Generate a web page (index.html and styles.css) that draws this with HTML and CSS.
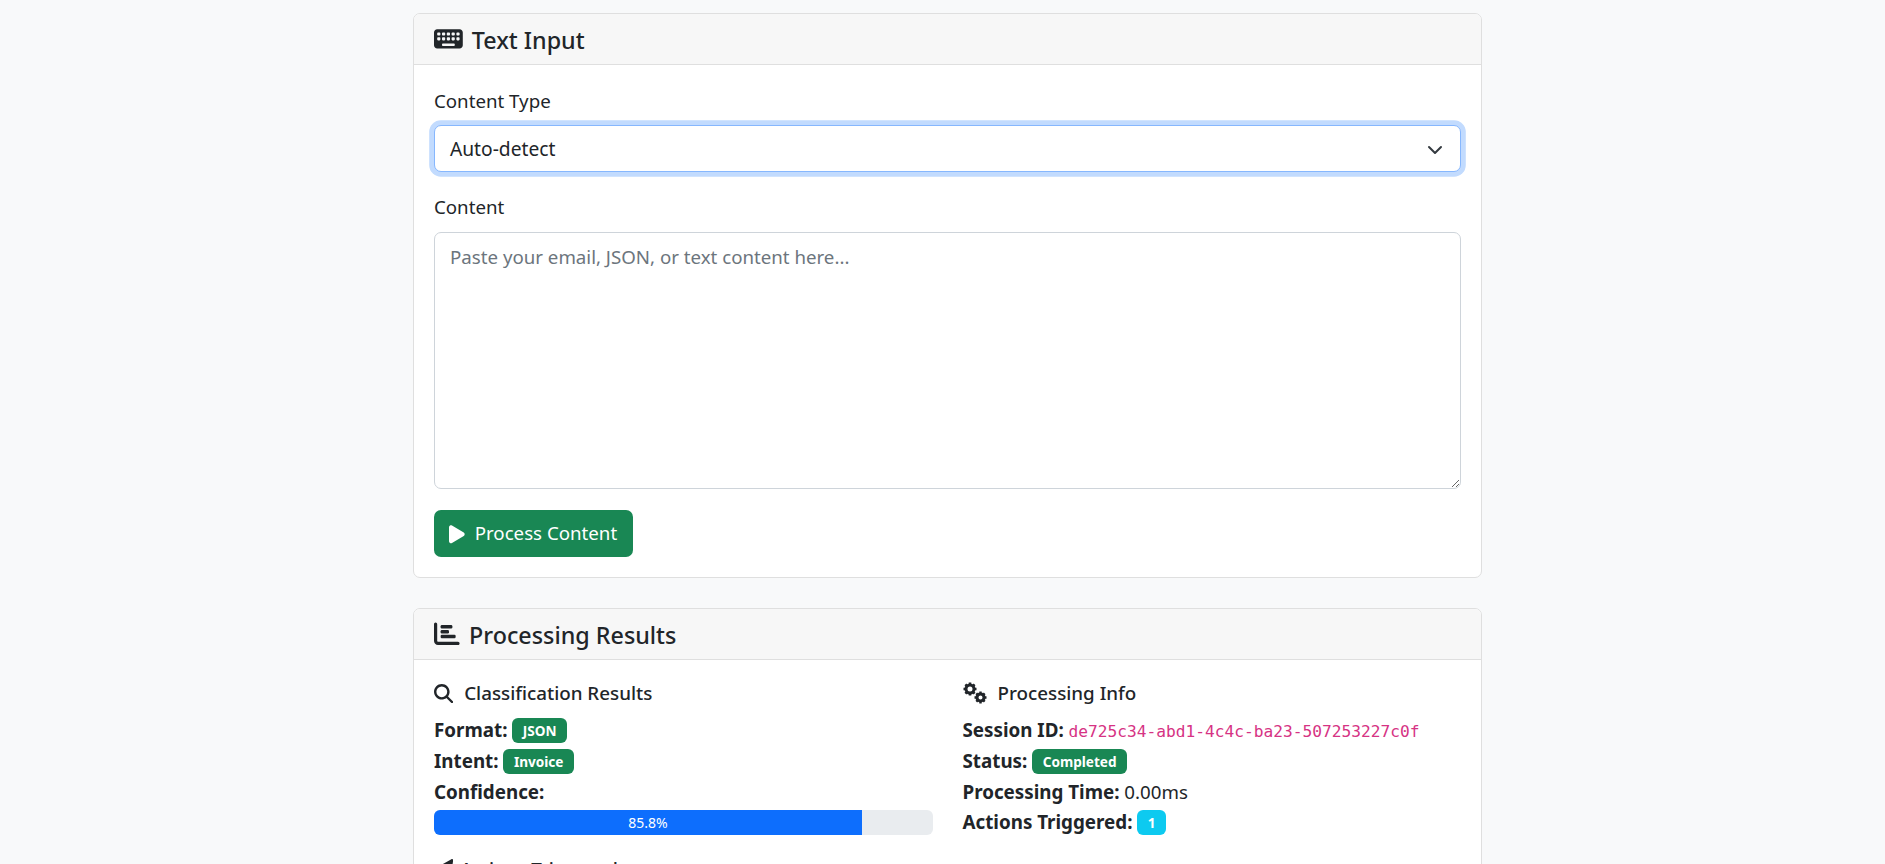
FILE: index.html
```html
<!doctype html>
<html lang="en">
<head>
<meta charset="UTF-8">
<title>Text Input</title>
<meta name="viewport" content="width=device-width,initial-scale=1">
<link rel="stylesheet" href="styles.css">
</head>
<body>
<div class="page">

 <div class="card card-input">
  <div class="card-header">
   <svg class="icon icon-keyboard" viewBox="0 0 576 512"><path d="M64 64C28.700 64 0 92.700 0 128V384c0 35.300 28.700 64 64 64H512c35.300 0 64-28.700 64-64V128c0-35.300-28.700-64-64-64H64zm16 64h32c8.800 0 16 7.200 16 16v32c0 8.800-7.200 16-16 16H80c-8.800 0-16-7.200-16-16V144c0-8.800 7.200-16 16-16zm-16 112c0-8.800 7.200-16 16-16h32c8.800 0 16 7.200 16 16v32c0 8.800-7.200 16-16 16H80c-8.800 0-16-7.200-16-16V240zm112-112h32c8.800 0 16 7.200 16 16v32c0 8.800-7.200 16-16 16H176c-8.800 0-16-7.200-16-16V144c0-8.800 7.200-16 16-16zm-16 112c0-8.800 7.200-16 16-16h32c8.800 0 16 7.200 16 16v32c0 8.800-7.200 16-16 16H176c-8.800 0-16-7.200-16-16V240zm112-112h32c8.800 0 16 7.200 16 16v32c0 8.800-7.200 16-16 16H272c-8.800 0-16-7.200-16-16V144c0-8.800 7.200-16 16-16zm-16 112c0-8.800 7.200-16 16-16h32c8.800 0 16 7.200 16 16v32c0 8.800-7.200 16-16 16H272c-8.800 0-16-7.200-16-16V240zm112-112h32c8.800 0 16 7.200 16 16v32c0 8.800-7.200 16-16 16H368c-8.800 0-16-7.200-16-16V144c0-8.800 7.200-16 16-16zm-16 112c0-8.800 7.200-16 16-16h32c8.800 0 16 7.200 16 16v32c0 8.800-7.200 16-16 16H368c-8.800 0-16-7.200-16-16V240zm112-112h32c8.800 0 16 7.200 16 16v32c0 8.800-7.200 16-16 16H464c-8.800 0-16-7.200-16-16V144c0-8.800 7.200-16 16-16zm-16 112c0-8.800 7.200-16 16-16h32c8.800 0 16 7.200 16 16v32c0 8.800-7.200 16-16 16H464c-8.800 0-16-7.200-16-16V240zM176 352H400c8.800 0 16 7.200 16 16v16c0 8.800-7.200 16-16 16H176c-8.800 0-16-7.200-16-16V368c0-8.800 7.200-16 16-16z"/></svg>
   <h5>Text Input</h5>
  </div>
  <div class="card-body">
   <div class="field">
    <label class="form-label">Content Type</label>
    <div class="select-box">
     <span>Auto-detect</span>
     <svg class="chevron" viewBox="0 0 16 16"><path fill="none" stroke="#343a40" stroke-linecap="round" stroke-linejoin="round" stroke-width="2" d="m2 5 6 6 6-6"/></svg>
    </div>
   </div>
   <div class="field field-last">
    <label class="form-label" for="content">Content</label>
    <textarea id="content" class="text-box" placeholder="Paste your email, JSON, or text content here..."></textarea>
   </div>
   <button class="btn-process">
    <svg class="icon icon-play" viewBox="0 0 384 512" preserveAspectRatio="none"><path d="M73 39c-14.800-9.100-33.400-9.400-48.500-.9S0 62.600 0 80V432c0 17.400 9.400 33.400 24.500 41.900s33.700 8.100 48.500-.9L361 297c14.300-8.700 23-24.200 23-41s-8.700-32.200-23-41L73 39z"/></svg>
    Process Content
   </button>
  </div>
 </div>

 <div class="card">
  <div class="card-header">
   <svg class="icon icon-chart" viewBox="0 0 512 512">
    <path d="M32 32c17.700 0 32 14.300 32 32V400c0 8.800 7.200 16 16 16H480c17.700 0 32 14.300 32 32s-14.300 32-32 32H80c-44.200 0-80-35.800-80-80V64C0 46.300 14.300 32 32 32z"/>
    <rect x="133" y="80" width="234" height="70" rx="24"/>
    <rect x="133" y="180" width="167" height="68" rx="24"/>
    <rect x="133" y="275" width="300" height="70" rx="24"/>
   </svg>
   <h5>Processing Results</h5>
  </div>
  <div class="card-body">
   <div class="row">
    <div class="col">
     <h6><svg class="icon-sm" viewBox="0 0 512 512"><path d="M416 208c0 45.900-14.900 88.300-40 122.700L502.600 457.400c12.500 12.500 12.500 32.800 0 45.300s-32.800 12.500-45.300 0L330.700 376c-34.400 25.200-76.800 40-122.700 40C93.100 416 0 322.900 0 208S93.100 0 208 0S416 93.100 416 208zM208 352a144 144 0 1 0 0-288 144 144 0 1 0 0 288z"/></svg>Classification Results</h6>
     <p><strong>Format:</strong> <span class="badge bg-green">JSON</span></p>
     <p><strong>Intent:</strong> <span class="badge bg-green">Invoice</span></p>
     <p><strong>Confidence:</strong></p>
     <div class="progress"><div class="progress-bar" style="width: 85.8%">85.8%</div></div>
    </div>
    <div class="col">
     <h6><svg class="icon-gears" viewBox="0 0 24 22"><g><circle cx="7" cy="7" r="4" fill="none" stroke="#212529" stroke-width="3"/><path stroke="#212529" stroke-width="2.600" d="M7 0.500v13M0.500 7h13M2.400 2.400l9.200 9.200M11.600 2.400l-9.200 9.200" stroke-dasharray="2.400 8.200"/><circle cx="17.500" cy="15.500" r="3.500" fill="none" stroke="#212529" stroke-width="3"/><path stroke="#212529" stroke-width="2.400" d="M17.500 9.500v12M11.500 15.500h12M13.300 11.300l8.400 8.400M21.700 11.300l-8.400 8.400" stroke-dasharray="2.200 7.600"/></g></svg>Processing Info</h6>
     <p><strong>Session ID:</strong> <code>de725c34-abd1-4c4c-ba23-507253227c0f</code></p>
     <p><strong>Status:</strong> <span class="badge bg-green">Completed</span></p>
     <p><strong>Processing Time:</strong> 0.00ms</p>
     <p><strong>Actions Triggered:</strong> <span class="badge bg-cyan">1</span></p>
    </div>
   </div>
   <h6 class="actions-title"><svg class="icon-sm" viewBox="0 0 512 512"><path d="M498.100 5.600c10.100 7 15.400 19.100 13.500 31.200l-64 416c-1.500 9.700-7.400 18.200-16 23s-18.900 5.400-28 1.600L284 427.700l-68.500 74.100c-8.900 9.700-22.900 12.900-35.200 8.100S160 493.200 160 480V396.400c0-4 1.500-7.800 4.200-10.700L331.800 202.800c5.800-6.300 5.600-16-.4-22s-15.700-6.400-22-.7L106 360.800 17.700 316.600C7.100 311.300 .3 300.700 0 288.900s5.900-22.800 16.100-28.700l448-256c10.700-6.100 23.900-5.500 34 1.400z"/></svg>Actions Triggered</h6>
  </div>
 </div>

</div>
</body>
</html>
```

FILE: styles.css
```css
* {
    box-sizing: border-box;
}
html, body {
    height: 100%;
}
body {
    margin: 0;
    overflow: hidden;
    background: #f8f9fa;
    color: #212529;
    font-family: "Noto Sans", "Open Sans", sans-serif;
    font-size: 18.700px;
    line-height: 30.700px;
}
.page {
    width: 1069px;
    margin-left: 413px;
    padding-top: 13px;
}

/* cards */
.card {
    background: #fff;
    border: 1px solid #dfdfdf;
    border-radius: 7px;
}
.card-input {
    margin-bottom: 30px;
}
.card-header {
    display: flex;
    align-items: center;
    height: 51px;
    padding: 0 20px;
    background: #f7f7f7;
    border-bottom: 1px solid #dfdfdf;
    border-radius: 6px 6px 0 0;
}
.card-header h5 {
    margin: 2px 0 0;
    font-size: 23.300px;
    font-weight: 500;
}
.card-body {
    padding: 20px;
}
.icon {
    fill: #212529;
    flex: none;
}
.icon-keyboard {
    width: 28.800px;
    height: 25.600px;
    margin-right: 9px;
}
.icon-chart {
    width: 25.600px;
    height: 25.600px;
    margin-right: 9.500px;
}

/* form */
.field {
    margin-bottom: 19.200px;
}
.field-last {
    margin-bottom: 21.500px;
}
.form-label {
    display: block;
    height: 32px;
    line-height: 32px;
    margin-bottom: 8.300px;
}
.select-box {
    display: flex;
    align-items: center;
    justify-content: space-between;
    height: 47px;
    padding: 2px 17px 0 15px;
    background: #fff;
    border: 1px solid #86b7fe;
    border-radius: 7px;
    box-shadow: 0 0 0 4.800px #c2dbfe;
    font-size: 19.200px;
}
.chevron {
    width: 16px;
    height: 16px;
}
.text-box {
    display: block;
    width: 100%;
    height: 257px;
    padding: 9px 15px;
    border: 1px solid #ced4da;
    border-radius: 7px;
    color: #212529;
    font: inherit;
    outline: none;
}
.text-box::placeholder {
    color: #6c757d;
}
.btn-process {
    display: flex;
    align-items: center;
    height: 47px;
    padding: 0 16px 0 15px;
    background: #198754;
    border: 0;
    border-radius: 7px;
    color: #fff;
    font: inherit;
}
.icon-play {
    width: 15.700px;
    height: 20.500px;
    margin-right: 10px;
    fill: #fff;
}

/* results */
.row {
    display: grid;
    grid-template-columns: 1fr 1fr;
    gap: 30px;
}
h6 {
    display: flex;
    align-items: center;
    height: 26px;
    margin: 0 0 9px;
    font-size: 18.800px;
    font-weight: 500;
}
.icon-sm {
    width: 19.200px;
    height: 19.200px;
    margin-right: 11px;
    fill: #212529;
}
.icon-gears {
    width: 24px;
    height: 22px;
    margin-right: 11px;
}
p {
    margin: 0;
    height: 30.700px;
}
strong {
    font-size: 18.800px;
    font-weight: 700;
}
code {
    color: #d63384;
    font-family: "DejaVu Sans Mono", monospace;
    font-size: 16.200px;
}
.badge {
    display: inline-block;
    padding: 6px 10.500px;
    border-radius: 6px;
    color: #fff;
    font-size: 13.600px;
    font-weight: 700;
    line-height: 13px;
    vertical-align: 1px;
}
.bg-green {
    background: #198754;
}
.bg-cyan {
    background: #0dcaf0;
}
.progress {
    height: 25px;
    margin-top: 3px;
    background: #e9ecef;
    border-radius: 6px;
    overflow: hidden;
}
.progress-bar {
    height: 100%;
    background: #0d6efd;
    color: #fff;
    font-size: 14px;
    line-height: 25px;
    text-align: center;
}
.actions-title {
    margin-top: 18px;
}
.actions-title .icon-sm {
    margin-right: 7px;
}
```
